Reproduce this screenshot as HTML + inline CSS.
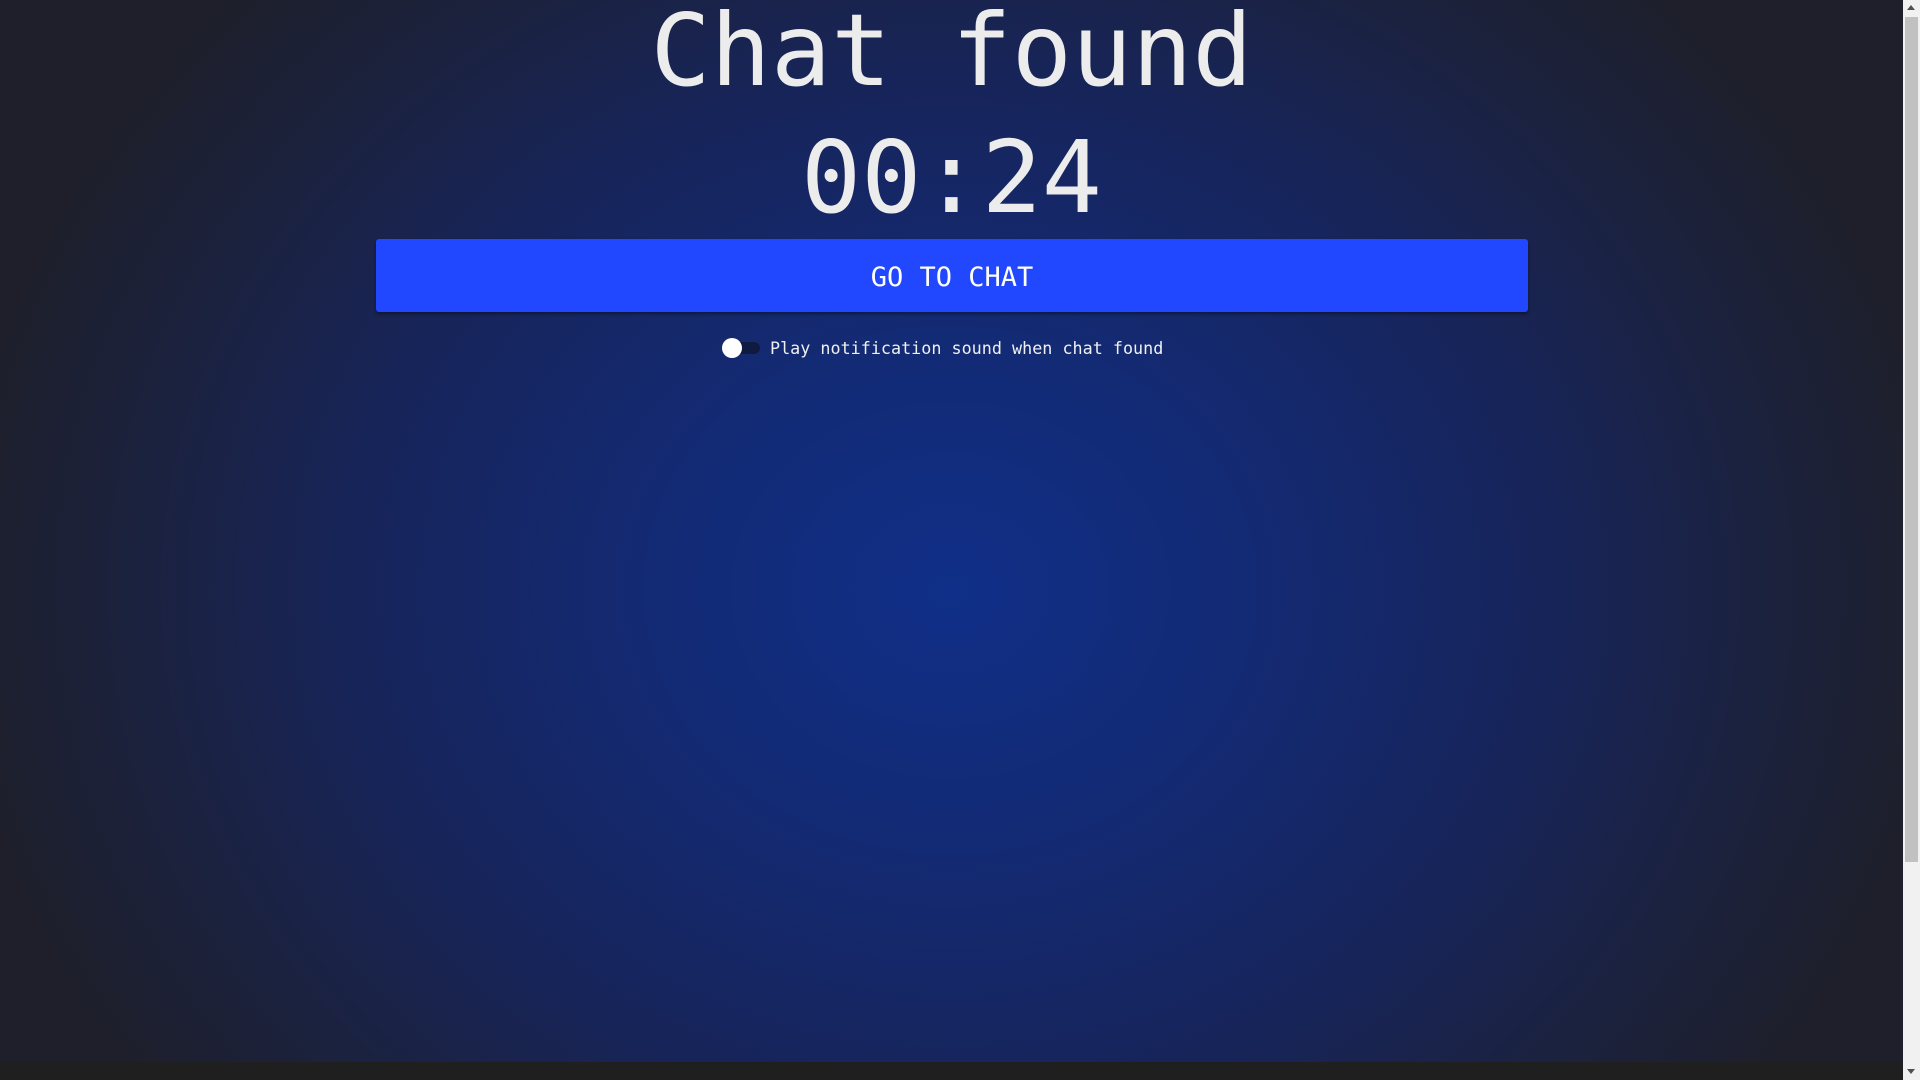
<!DOCTYPE html>
<html><head><meta charset="utf-8"><style>
html,body{margin:0;padding:0;width:1920px;height:1080px;overflow:hidden;}
body{background:#1f1f1f;position:relative;font-family:"DejaVu Sans Mono","Liberation Mono",monospace;}
#bg{position:absolute;left:0;top:0;width:1903px;height:1062px;
background:radial-gradient(ellipse 1000px 860px at 950px 590px,#102f88 0%,#132a74 30%,#172459 60%,#1b2240 80%,#1e1f2a 100%);}
.t{position:absolute;left:0;width:1903px;text-align:center;color:#ececec;font-size:100px;line-height:1;}
#btn{position:absolute;left:376px;top:239px;width:1152px;height:73px;background:#2148ff;border-radius:3px;color:#fff;
font-family:"DejaVu Sans Mono","Liberation Mono",monospace;font-size:27px;text-align:center;line-height:77px;box-shadow:0 2px 3px rgba(0,0,0,.4);}
#track{position:absolute;left:728px;top:342px;width:32px;height:12px;border-radius:6px;background:#0f1a40;}
#knob{position:absolute;left:722px;top:338px;width:20px;height:20px;border-radius:50%;background:#fff;}
#lbl{position:absolute;left:770px;top:338px;font-size:16.75px;color:#f0f0f0;white-space:pre;}
#sb{position:absolute;left:1903px;top:0;width:17px;height:1080px;background:#f1f1f1;}
#th{position:absolute;left:1905px;top:17px;width:13px;height:845px;background:#c1c1c1;}
.ar{position:absolute;left:1907px;width:0;height:0;border-left:4px solid transparent;border-right:4px solid transparent;}
</style></head><body>
<div id="bg"></div>
<div class="t" style="top:1px">Chat found</div>
<div class="t" style="top:128px">00:24</div>
<div id="btn">GO TO CHAT</div>
<div id="track"></div><div id="knob"></div>
<div id="lbl">Play notification sound when chat found</div>
<div id="sb"></div><div id="th"></div>
<div class="ar" style="top:5px;border-bottom:5px solid #505050"></div>
<div class="ar" style="top:1069px;border-top:5px solid #505050"></div>
</body></html>
